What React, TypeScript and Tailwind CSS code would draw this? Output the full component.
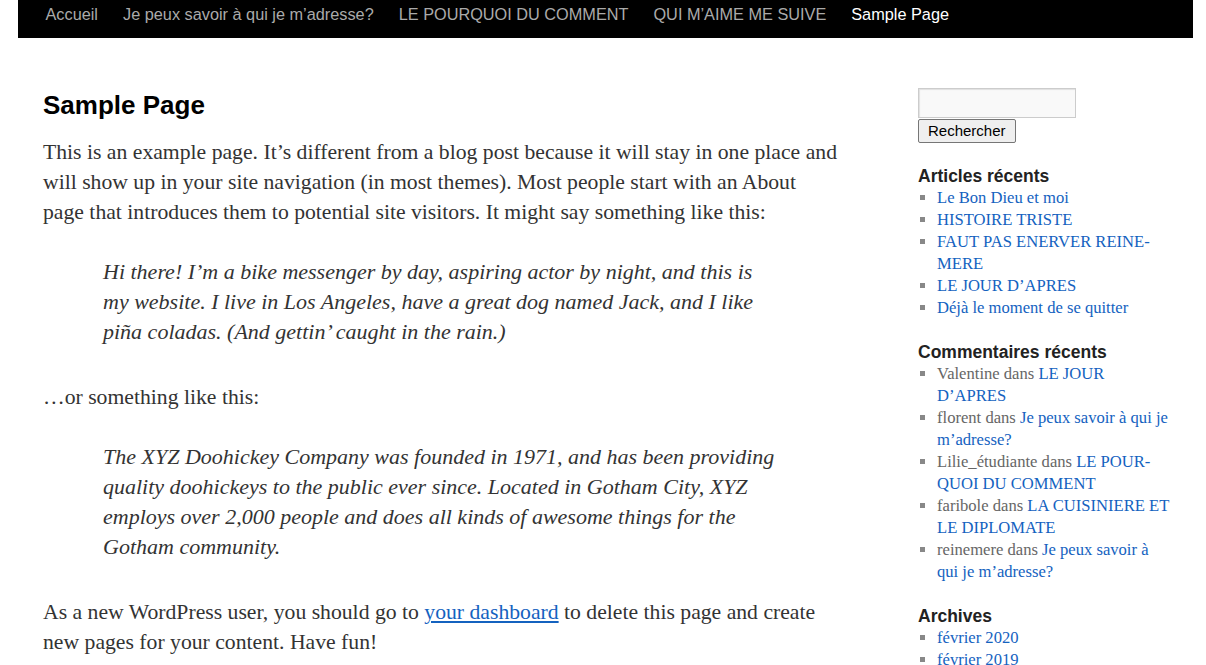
const navItems = [
  { label: "Accueil", current: false },
  { label: "Je peux savoir à qui je m’adresse?", current: false },
  { label: "LE POURQUOI DU COMMENT", current: false },
  { label: "QUI M’AIME ME SUIVE", current: false },
  { label: "Sample Page", current: true },
];

// line breaks follow the original sidebar wrapping
const recentPosts = [
  "Le Bon Dieu et moi",
  "HISTOIRE TRISTE",
  "FAUT PAS ENERVER REINE-\nMERE",
  "LE JOUR D’APRES",
  "Déjà le moment de se quitter",
];

const recentComments = [
  { author: "Valentine", post: "LE JOUR\nD’APRES" },
  { author: "florent", post: "Je peux savoir à qui je\nm’adresse?" },
  { author: "Lilie_étudiante", post: "LE POUR-\nQUOI DU COMMENT" },
  { author: "faribole", post: "LA CUISINIERE ET\nLE DIPLOMATE" },
  { author: "reinemere", post: "Je peux savoir à\nqui je m’adresse?" },
];

const archives = ["février 2020", "février 2019", "janvier 2019"];

const sans = "font-['Liberation_Sans',Arial,sans-serif]";
const serif = "font-['Liberation_Serif','Times_New_Roman',serif]";

function WidgetTitle({ children }: { children: React.ReactNode }) {
  return (
    <h3
      className={`${sans} text-[17.5px] font-bold leading-[22px] text-[#222]`}
    >
      {children}
    </h3>
  );
}

function WidgetList({ children }: { children: React.ReactNode }) {
  return (
    <ul
      className={`${serif} ml-[19px] list-[square] whitespace-pre-line text-[16.6px] leading-[22px] text-[#666] marker:text-[#888]`}
    >
      {children}
    </ul>
  );
}

export default function App() {
  return (
    <div className="h-[665px] w-full overflow-hidden bg-white">
      <div className="ml-[18px] w-[1175px]">
        {/* menu principal */}
        <nav className={`${sans} flex h-[38px] items-start bg-black px-[15px]`}>
          {navItems.map((item) => (
            <a
              key={item.label}
              href="#"
              className={`px-[12.5px] text-[16.3px] leading-[29px] ${
                item.current ? "text-white" : "text-[#aaa]"
              }`}
            >
              {item.label}
            </a>
          ))}
        </nav>

        <div className="mt-[50px] flex pl-[25px]">
          <main className="w-[800px] shrink-0 text-[#333]">
            <h1
              className={`${sans} text-[26px] font-bold leading-[34px] text-black`}
            >
              Sample Page
            </h1>
            <div
              className={`${serif} w-[797px] pt-[15px] text-[21.7px] leading-[30px]`}
            >
              <p className="mb-[30px]">
                This is an example page. It’s different from a blog post because
                it will stay in one place and will show up in your site
                navigation (in most themes). Most people start with an About
                page that introduces them to potential site visitors. It might
                say something like this:
              </p>
              <blockquote className="mb-[35px] pl-[60px] pr-[61px] text-[22px] italic">
                <p>
                  Hi there! I’m a bike messenger by day, aspiring actor by
                  night, and this is my website. I live in Los Angeles, have a
                  great dog named Jack, and I like piña coladas. (And gettin’
                  caught in the rain.)
                </p>
              </blockquote>
              <p className="mb-[30px]">…or something like this:</p>
              <blockquote className="mb-[35px] pl-[60px] pr-[61px] text-[22px] italic">
                <p>
                  The XYZ Doohickey Company was founded in 1971, and has been
                  providing quality doohickeys to the public ever since. Located
                  in Gotham City, XYZ employs over 2,000 people and does all
                  kinds of awesome things for the Gotham community.
                </p>
              </blockquote>
              <p className="mb-[30px]">
                As a new WordPress user, you should go to{" "}
                <a href="#" className="text-[#1462bf] underline">
                  your dashboard
                </a>{" "}
                to delete this page and create new pages for your content. Have
                fun!
              </p>
            </div>
          </main>

          <aside className="ml-[75px] w-[275px] shrink-0">
            <form className="mb-[22px]">
              <input
                type="text"
                className="block h-[30px] w-[158px] border border-[#ccc] bg-[#f9f9f9] shadow-[inset_1px_1px_1px_rgba(0,0,0,0.1)] outline-none"
              />
              <button
                type="button"
                className={`${sans} h-[24px] rounded-[2px] border border-[#767676] bg-[#efefef] px-[9px] text-[15px] leading-[20px] text-black`}
              >
                Rechercher
              </button>
            </form>

            <section className="mb-[22px]">
              <WidgetTitle>Articles récents</WidgetTitle>
              <WidgetList>
                {recentPosts.map((p) => (
                  <li key={p}>
                    <a href="#" className="text-[#1462bf]">
                      {p}
                    </a>
                  </li>
                ))}
              </WidgetList>
            </section>

            <section className="mb-[22px]">
              <WidgetTitle>Commentaires récents</WidgetTitle>
              <WidgetList>
                {recentComments.map((c, i) => (
                  <li key={i}>
                    {c.author} dans{" "}
                    <a href="#" className="text-[#1462bf]">
                      {c.post}
                    </a>
                  </li>
                ))}
              </WidgetList>
            </section>

            <section className="mb-[22px]">
              <WidgetTitle>Archives</WidgetTitle>
              <WidgetList>
                {archives.map((a) => (
                  <li key={a}>
                    <a href="#" className="text-[#1462bf]">
                      {a}
                    </a>
                  </li>
                ))}
              </WidgetList>
            </section>
          </aside>
        </div>
      </div>
    </div>
  );
}
